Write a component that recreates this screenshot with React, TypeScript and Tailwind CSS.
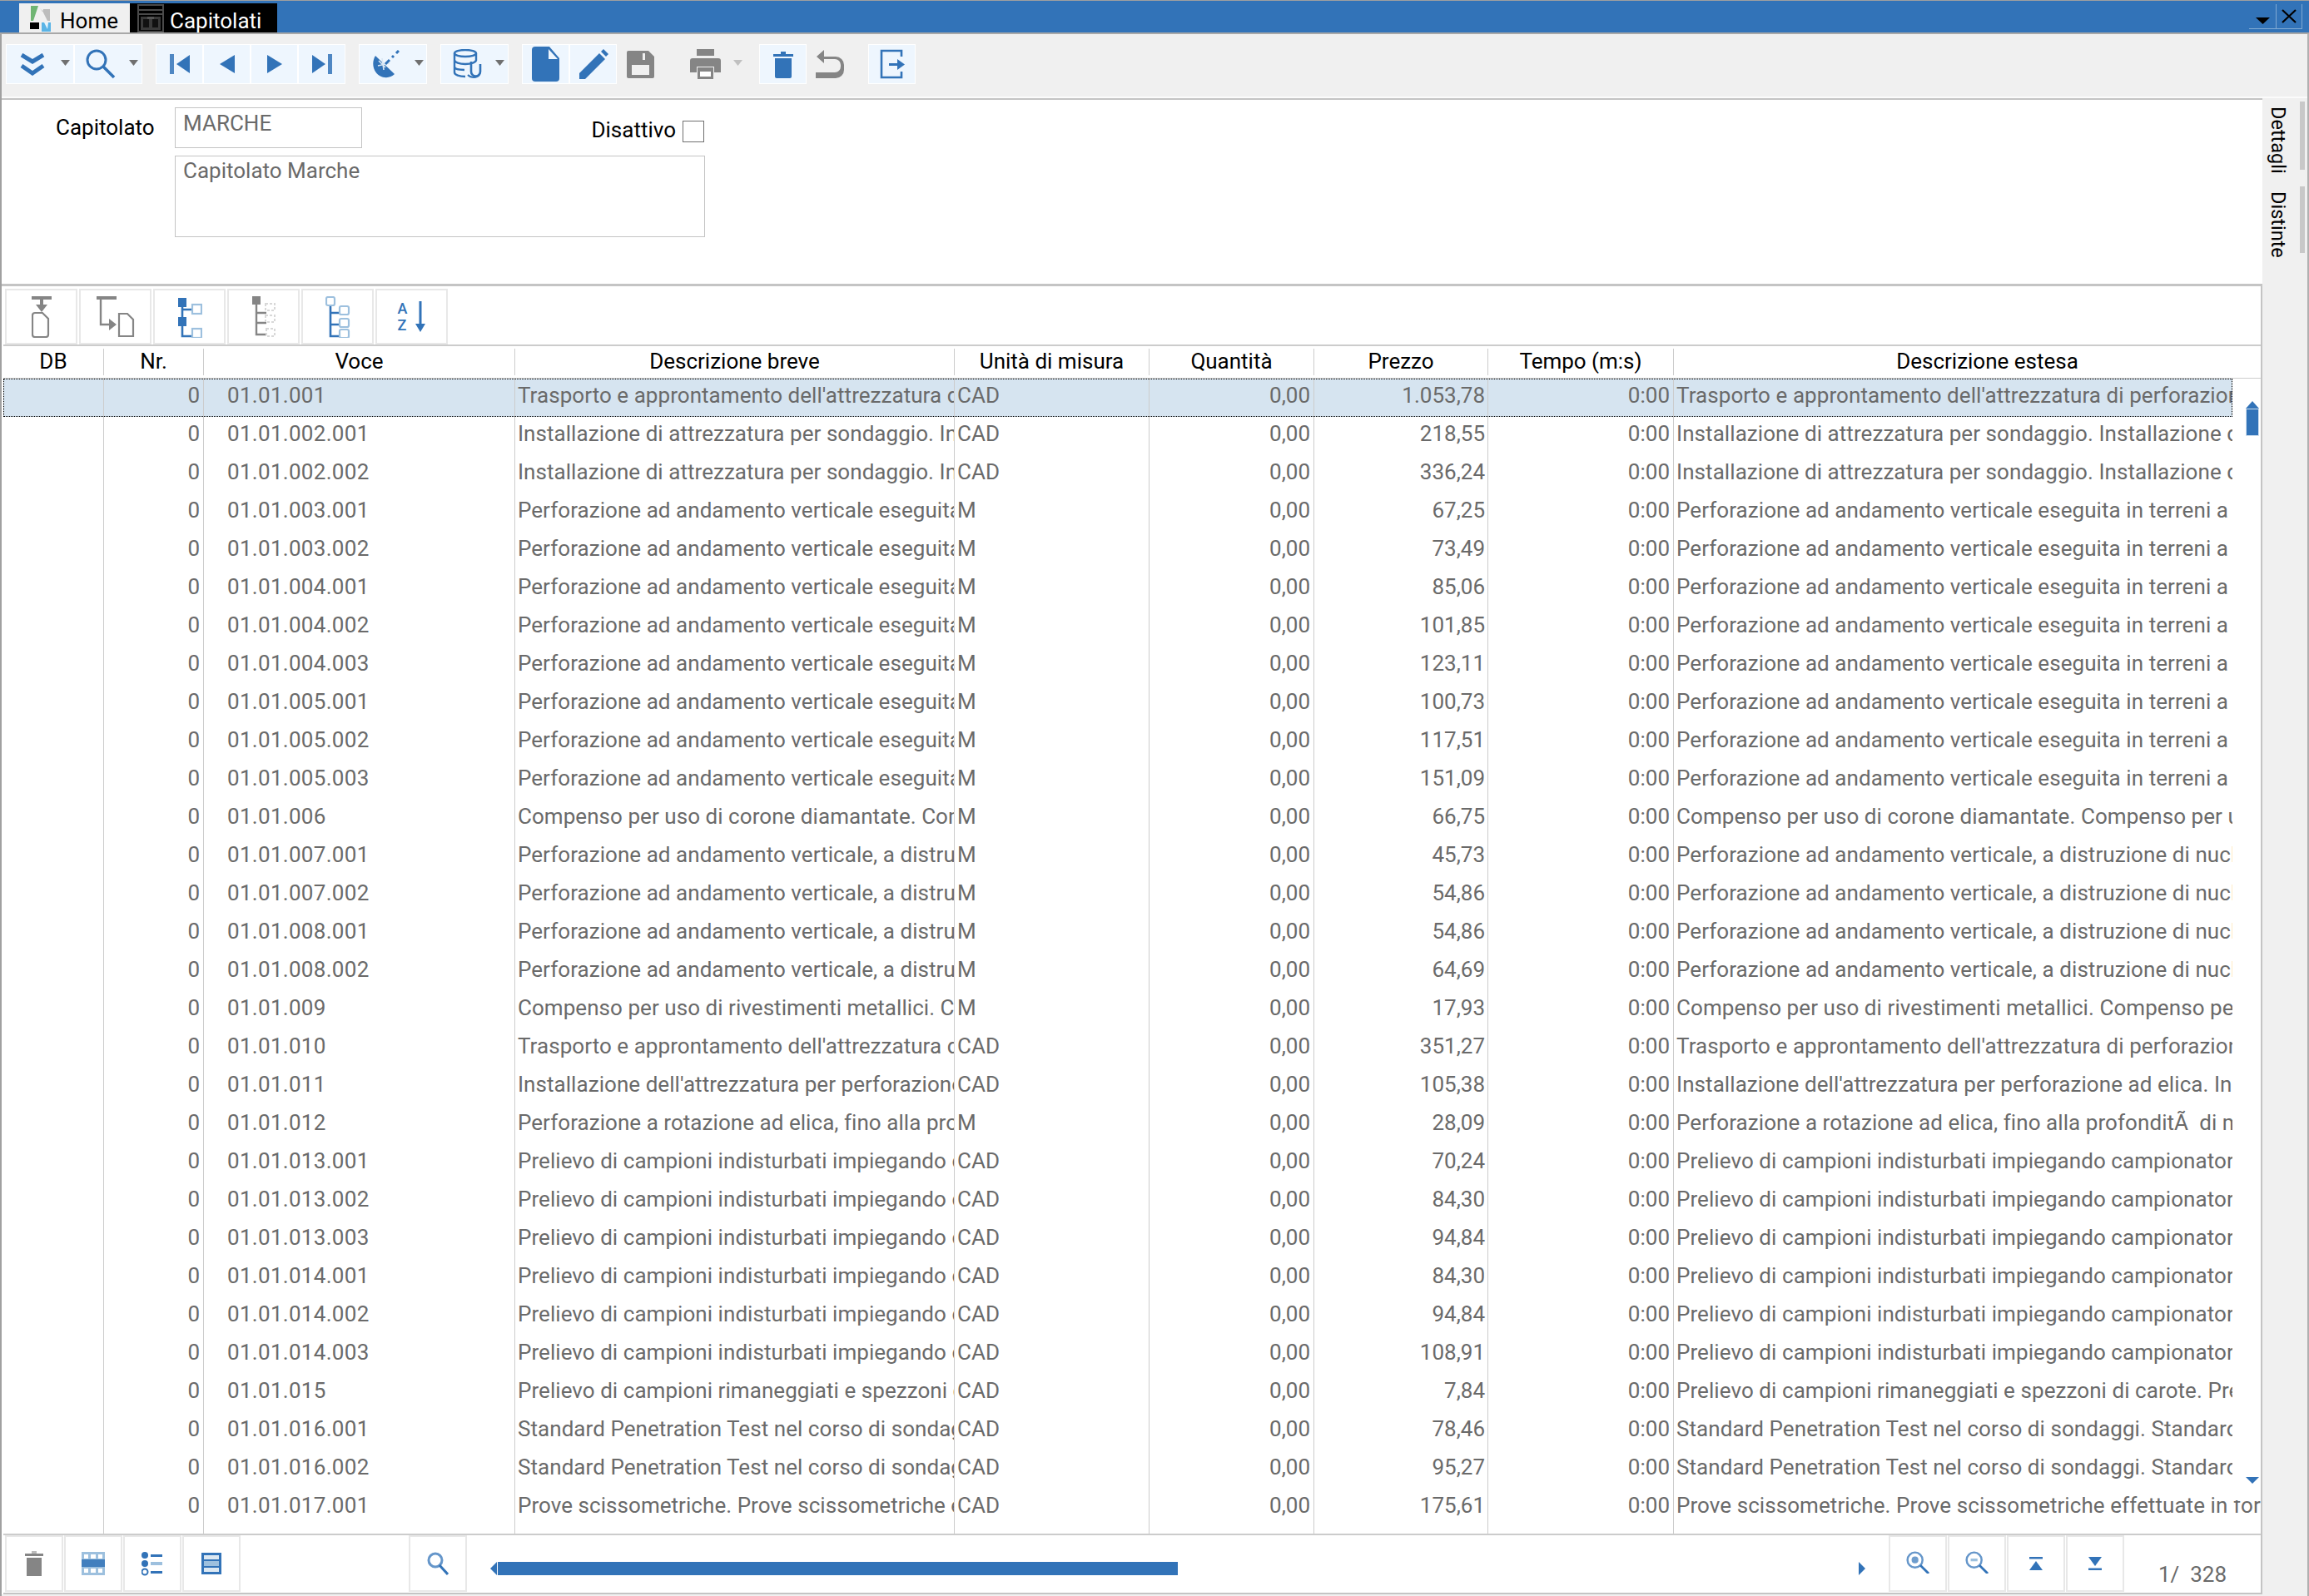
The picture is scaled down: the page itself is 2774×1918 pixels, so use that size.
import type { ReactNode } from "react";

const B = "#3273b8";
const L = "#9dc0de";
const G = "#858585";

const T = "Trasporto e approntamento dell'attrezzatura di perforazione";
const I = "Installazione di attrezzatura per sondaggio. Installazione di attrezzatura";
const P = "Perforazione ad andamento verticale eseguita in terreni a grana";
const C = "Compenso per uso di corone diamantate. Compenso per uso";
const D = "Perforazione ad andamento verticale, a distruzione di nucleo";
const R = "Compenso per uso di rivestimenti metallici. Compenso per uso";
const N = "Installazione dell'attrezzatura per perforazione ad elica. Installazione";
const E = "Perforazione a rotazione ad elica, fino alla profonditÃ\u00a0 di metri";
const K = "Prelievo di campioni indisturbati impiegando campionatore a pareti";
const M = "Prelievo di campioni rimaneggiati e spezzoni di carote. Prelievo";
const S = "Standard Penetration Test nel corso di sondaggi. Standard Penetration";
const V = "Prove scissometriche. Prove scissometriche effettuate in foro";

const rows: [string, string, string, string][] = [
  ["01.01.001", T, "CAD", "1.053,78"],
  ["01.01.002.001", I, "CAD", "218,55"],
  ["01.01.002.002", I, "CAD", "336,24"],
  ["01.01.003.001", P, "M", "67,25"],
  ["01.01.003.002", P, "M", "73,49"],
  ["01.01.004.001", P, "M", "85,06"],
  ["01.01.004.002", P, "M", "101,85"],
  ["01.01.004.003", P, "M", "123,11"],
  ["01.01.005.001", P, "M", "100,73"],
  ["01.01.005.002", P, "M", "117,51"],
  ["01.01.005.003", P, "M", "151,09"],
  ["01.01.006", C, "M", "66,75"],
  ["01.01.007.001", D, "M", "45,73"],
  ["01.01.007.002", D, "M", "54,86"],
  ["01.01.008.001", D, "M", "54,86"],
  ["01.01.008.002", D, "M", "64,69"],
  ["01.01.009", R, "M", "17,93"],
  ["01.01.010", T, "CAD", "351,27"],
  ["01.01.011", N, "CAD", "105,38"],
  ["01.01.012", E, "M", "28,09"],
  ["01.01.013.001", K, "CAD", "70,24"],
  ["01.01.013.002", K, "CAD", "84,30"],
  ["01.01.013.003", K, "CAD", "94,84"],
  ["01.01.014.001", K, "CAD", "84,30"],
  ["01.01.014.002", K, "CAD", "94,84"],
  ["01.01.014.003", K, "CAD", "108,91"],
  ["01.01.015", M, "CAD", "7,84"],
  ["01.01.016.001", S, "CAD", "78,46"],
  ["01.01.016.002", S, "CAD", "95,27"],
  ["01.01.017.001", V, "CAD", "175,61"],
];

const Icon = ({ w, h, children }: { w: number; h: number; children: ReactNode }) => (
  <svg width={w} height={h} viewBox={`0 0 ${w} ${h}`} className="block shrink-0">
    {children}
  </svg>
);

const Caret = ({ light }: { light?: boolean }) => (
  <Icon w={11} h={7}>
    <path d="M0 0h11L5.5 7z" fill={light ? "#c0c0c0" : "#707070"} />
  </Icon>
);

// top toolbar button
const Tb = ({ w, children, caret, pl }: { w: number; children: ReactNode; caret?: number; pl?: number }) => (
  <div
    className="h-[48px] shrink-0 flex items-center border border-white bg-[#eef6fe]"
    style={{ width: w, justifyContent: pl === undefined ? "center" : "flex-start", paddingLeft: pl }}
  >
    {children}
    {caret !== undefined && (
      <div style={{ marginLeft: caret }} className="mb-[3px]">
        <Caret />
      </div>
    )}
  </div>
);

// white framed button of the lower toolbars
const Fb = ({ w, h, children }: { w: number; h: number; children: ReactNode }) => (
  <div className="shrink-0 flex items-center justify-center border-2 border-[#e8e8e8] bg-white" style={{ width: w, height: h }}>
    {children}
  </div>
);

const Magnifier = ({ s = 1, inner }: { s?: number; inner?: ReactNode }) => (
  <svg width={34 * s} height={34 * s} viewBox="0 0 34 34" className="block shrink-0">
    <circle cx="13" cy="13" r="11" fill="none" stroke={B} strokeWidth="3" strokeOpacity=".75" />
    <path d="M21 21l12 12" stroke={B} strokeWidth="3.4" />
    {inner}
  </svg>
);

const HomeLogo = () => (
  <Icon w={25} h={31}>
    <path d="M1 0h9L4 18H1z" fill="#6fb573" />
    <path d="M12 3L15 7l1-3h8v14h-3L15 6z" fill="#bcbcbc" />
    <rect x="0" y="20" width="11" height="8" fill="#000" />
    <path d="M14 20h11v11H14z" fill="#5ab4e6" />
    <path d="M17 20l4 8 1-8z" fill="#e8f4fb" />
  </Icon>
);

const WinLogo = () => (
  <Icon w={32} h={34}>
    <rect x="1" y="1" width="30" height="32" fill="#000" stroke="#4a4a4a" strokeWidth="2" />
    <path d="M2 7h28M2 12h28" stroke="#4a4a4a" strokeWidth="2" />
    <path d="M4 15h24v16H4z" fill="#3a3a3a" />
    <path d="M7 18h7v10H7zM18 18h7v10h-7z" fill="#111" />
    <path d="M12 15h8v3h-8z" fill="#555" />
  </Icon>
);

const TopTools = () => (
  <div className="h-[75px] bg-[#f0f0f0] flex pl-[5px] pt-[12px]">
    <Tb w={82} pl={16} caret={19}>
      <Icon w={30} h={27}>
        <path d="M2 2l13 8 13-8M2 15l13 9 13-9" fill="none" stroke={B} strokeWidth="5" />
      </Icon>
    </Tb>
    <Tb w={82} pl={13} caret={16}>
      <Icon w={36} h={36}>
        <circle cx="13" cy="13" r="11" fill="none" stroke={B} strokeWidth="3" />
        <path d="M21 21l13 13" stroke={B} strokeWidth="3.5" />
      </Icon>
    </Tb>
    <div className="w-[16px] shrink-0" />
    <Tb w={57}>
      <Icon w={26} h={24}>
        <path d="M1 0h5v24H1z" fill={B} fillOpacity=".85" />
        <path d="M25 1v22L9 12z" fill={B} />
      </Icon>
    </Tb>
    <Tb w={57}>
      <Icon w={20} h={24}>
        <path d="M19 1v22L1 12z" fill={B} />
      </Icon>
    </Tb>
    <Tb w={57}>
      <Icon w={20} h={24}>
        <path d="M1 1v22l18-11z" fill={B} />
      </Icon>
    </Tb>
    <Tb w={57}>
      <Icon w={26} h={24}>
        <path d="M20 0h5v24h-5z" fill={B} fillOpacity=".85" />
        <path d="M1 1v22l16-11z" fill={B} />
      </Icon>
    </Tb>
    <div className="w-[16px] shrink-0" />
    <Tb w={82} pl={15} caret={18}>
      <Icon w={33} h={34}>
        <path d="M4 7C-1 15 1 26 9 31c7 4 14 2 18-2z" fill={B} />
        <path d="M8 13l8 8M12 10l2 14M7 19l14-3" stroke="#dbe8f4" strokeWidth="1.6" />
        <path d="M16 17l5-5M24 9l2-2M29 4l3-3" stroke={B} strokeWidth="3" />
      </Icon>
    </Tb>
    <div className="w-[16px] shrink-0" />
    <Tb w={82} pl={14} caret={16}>
      <Icon w={35} h={36}>
        <ellipse cx="15" cy="5" rx="13" ry="4" fill="none" stroke={B} strokeWidth="2.4" />
        <path d="M2 5v23c0 3 6 5 13 5M28 5v9M2 13c0 3 6 5 13 5s13-2 13-5M2 21c0 3 6 4 12 4" fill="none" stroke={B} strokeWidth="2.4" />
        <path d="M22 15v12a5 5 0 0 0 11 0v-9" fill="none" stroke={B} strokeWidth="2.6" />
        <path d="M18 31c4 4 11 4 14 0" fill="none" stroke={B} strokeWidth="2" />
      </Icon>
    </Tb>
    <div className="w-[16px] shrink-0" />
    <Tb w={57}>
      <Icon w={33} h={42}>
        <path d="M4 0h17l12 14v24a4 4 0 0 1-4 4H4a4 4 0 0 1-4-4V4a4 4 0 0 1 4-4z" fill={B} />
        <path d="M20 3v12h11z" fill="#eef6fe" />
      </Icon>
    </Tb>
    <Tb w={57}>
      <Icon w={36} h={37}>
        <path d="M1 29L25 5l7 7L8 36H1z" fill={B} />
        <path d="M27 3l3-3 6 6-3 3z" fill={B} />
      </Icon>
    </Tb>
    <div className="w-[57px] shrink-0 h-[48px] flex items-center justify-center">
      <Icon w={33} h={33}>
        <path d="M2 0h24l7 7v24a2 2 0 0 1-2 2H2a2 2 0 0 1-2-2V2a2 2 0 0 1 2-2z" fill={G} />
        <path d="M6 17h21v12H6z" fill="#f0f0f0" />
        <path d="M19 3h3v8h-3z" fill="#f0f0f0" />
      </Icon>
    </div>
    <div className="w-[114px] shrink-0 h-[48px] flex items-center pl-[31px]">
      <Icon w={37} h={36}>
        <path d="M8 0h21v8H8z" fill={G} />
        <path d="M3 11h31a3 3 0 0 1 3 3v14h-8v-7H8v7H0V14a3 3 0 0 1 3-3z" fill={G} />
        <path d="M9 22h19v14H9z" fill={G} />
        <path d="M12 27h13v6H12z" fill="#fff" />
      </Icon>
      <div className="ml-[15px] mb-[3px]">
        <Caret light />
      </div>
    </div>
    <Tb w={57}>
      <Icon w={24} h={34}>
        <path d="M0 5h24v3H0z" fill={B} />
        <path d="M9 2h6v4H9z" fill={B} />
        <path d="M2 10h20v22a2 2 0 0 1-2 2H4a2 2 0 0 1-2-2z" fill={B} />
      </Icon>
    </Tb>
    <div className="w-[74px] shrink-0 h-[48px] flex items-center pl-[11px]">
      <Icon w={34} h={34}>
        <path d="M10 0L1 8l9 8v-5h13a7 7 0 0 1 7 7v2a7 7 0 0 1-7 7H0v7h24a10 10 0 0 0 10-10v-6a10 10 0 0 0-10-10H10z" fill={G} />
      </Icon>
    </div>
    <Tb w={57}>
      <Icon w={30} h={36}>
        <path d="M26 9V2H2v32h24v-7" fill="none" stroke={B} strokeWidth="2.6" />
        <path d="M11 17h11v3H11z" fill={B} />
        <path d="M21 12l9 6.500-9 6.500z" fill={B} />
      </Icon>
    </Tb>
  </div>
);

const MidTools = () => (
  <div className="h-[70px] flex gap-[2px] pl-[2px] pt-[3px] bg-white">
    <Fb w={87} h={67}>
      <Icon w={24} h={50}>
        <path d="M0 0h24v4H0z" fill={G} />
        <path d="M10 4h4v6h5l-7 9-7-9h5z" fill={G} />
        <path d="M4 20h9l7 7v19a3 3 0 0 1-3 3H4a3 3 0 0 1-3-3V23a3 3 0 0 1 3-3z" fill="none" stroke={G} strokeWidth="2.2" />
      </Icon>
    </Fb>
    <Fb w={87} h={67}>
      <Icon w={46} h={50}>
        <path d="M0 2h24" stroke={G} strokeWidth="4" />
        <path d="M5 3v31h14" fill="none" stroke={G} strokeWidth="2.4" />
        <path d="M15 27l9 7-9 7z" fill={G} />
        <path d="M27 21h10l7 7v20H27z" fill="none" stroke={G} strokeWidth="2.2" />
      </Icon>
    </Fb>
    <Fb w={87} h={67}>
      <Icon w={30} h={50}>
        <path d="M6 8v40h14M6 16h14M6 32h0" fill="none" stroke={B} strokeWidth="2.6" />
        <rect x="1" y="2" width="10" height="11" fill={B} />
        <rect x="1" y="25" width="10" height="11" fill={B} />
        <rect x="18" y="10" width="11" height="11" fill="#fff" stroke={L} strokeWidth="2.2" />
        <rect x="18" y="39" width="11" height="11" fill="#fff" stroke={L} strokeWidth="2.2" />
      </Icon>
    </Fb>
    <Fb w={87} h={67}>
      <Icon w={28} h={50}>
        <path d="M5 8v38h12M5 20h12M5 32h12" fill="none" stroke={G} strokeWidth="2.4" />
        <rect x="0" y="0" width="10" height="10" fill={G} />
        <path d="M16 9h11v8H16zM16 23h11v8H16zM17 39h10v9H17z" fill="none" stroke="#d8d8d8" strokeWidth="2" strokeDasharray="3 2" />
      </Icon>
    </Fb>
    <Fb w={87} h={67}>
      <Icon w={30} h={50}>
        <path d="M6 10v38h12M6 20h12M6 34h12" fill="none" stroke={B} strokeWidth="2.6" />
        <rect x="1" y="1" width="10" height="10" rx="2" fill="#fff" stroke={L} strokeWidth="2.2" />
        <rect x="17" y="12" width="11" height="10" rx="2" fill="#fff" stroke={L} strokeWidth="2.2" />
        <rect x="17" y="27" width="11" height="10" rx="2" fill="#fff" stroke={L} strokeWidth="2.2" />
        <rect x="17" y="40" width="11" height="10" rx="2" fill="#fff" stroke={L} strokeWidth="2.2" />
      </Icon>
    </Fb>
    <Fb w={87} h={67}>
      <div className="flex items-center gap-[10px]">
        <div className="flex flex-col text-[18px] leading-[20px] font-medium text-[#3273b8]">
          <span>A</span>
          <span>Z</span>
        </div>
        <Icon w={12} h={38}>
          <path d="M4.500 0h3v29h-3z" fill={B} />
          <path d="M0 27h12l-6 10z" fill={B} />
        </Icon>
      </div>
    </Fb>
  </div>
);

const widths = [121, 120, 374, 528, 234, 198, 209, 223];
const heads = ["DB", "Nr.", "Voce", "Descrizione breve", "Unità di misura", "Quantità", "Prezzo", "Tempo (m:s)"];

const Header = () => (
  <div className="h-[38px] flex pt-[3px] text-black">
    {heads.map((h, i) => (
      <div key={h} className="h-[32px] flex items-center justify-center border-r border-[#cccccc] shrink-0 pb-[3px]" style={{ width: widths[i] }}>
        {h}
      </div>
    ))}
    <div className="h-[32px] flex-1 flex items-center justify-center pl-[48px] pb-[3px]">Descrizione estesa</div>
  </div>
);

const cellBase = "h-full shrink-0 border-r border-[#cccccc] flex items-center overflow-hidden whitespace-nowrap pb-[7px]";

const Row = ({ r, selected, last }: { r: [string, string, string, string]; selected: boolean; last: boolean }) => (
  <div
    className={
      "h-[46px] flex shrink-0 text-[#6a6a6a] overflow-hidden " +
      (last ? "w-[2712px] " : "w-[2678px] ") +
      (selected ? "bg-[#d6e4f0] outline-1 outline-dotted outline-black -outline-offset-1" : "")
    }
  >
    <div className={cellBase} style={{ width: widths[0] }} />
    <div className={cellBase + " justify-end pr-[4px]"} style={{ width: widths[1] }}>0</div>
    <div className={cellBase + " pl-[28px] tracking-[0.3px]"} style={{ width: widths[2] }}>{r[0]}</div>
    <div className={cellBase + " pl-[3px] tracking-[0.05px]"} style={{ width: widths[3] }}>{r[1]}</div>
    <div className={cellBase + " pl-[3px]"} style={{ width: widths[4] }}>{r[2]}</div>
    <div className={cellBase + " justify-end pr-[4px]"} style={{ width: widths[5] }}>0,00</div>
    <div className={cellBase + " justify-end pr-[3px]"} style={{ width: widths[6] }}>{r[3]}</div>
    <div className={cellBase + " justify-end pr-[4px]"} style={{ width: widths[7] }}>0:00</div>
    <div className="h-full flex-1 flex items-center overflow-hidden whitespace-nowrap pl-[3px] pb-[7px] tracking-[0.07px]">{r[1]}</div>
  </div>
);

const Grid = () => (
  <div className="relative h-[1388px] overflow-hidden">
    {rows.map((r, i) => (
      <Row key={r[0]} r={r} selected={i === 0} last={i === rows.length - 1} />
    ))}
    <div className="flex h-[8px]">
      {widths.map((w, i) => (
        <div key={i} className="h-full border-r border-[#cccccc] shrink-0" style={{ width: w }} />
      ))}
    </div>
    {/* vertical scrollbar, over the clipped text */}
    <div className="absolute right-0 top-0 w-[34px] h-[1348px] bg-white flex flex-col items-end pr-[2px]">
      <div className="mt-[27px]">
        <Icon w={16} h={9}>
          <path d="M8 0l8 9H0z" fill={B} />
        </Icon>
      </div>
      <div className="w-[16px] h-[33px] border border-[#cfe0ef] bg-[#3273b8]" />
      <div className="mt-auto mb-[20px]">
        <Icon w={16} h={8}>
          <path d="M0 0h16L8 8z" fill={B} />
        </Icon>
      </div>
    </div>
  </div>
);

const BottomTools = () => (
  <div className="h-[69px] flex bg-white pl-[2px] text-[#6a6a6a]">
    <div className="flex gap-[1px] h-[68px]">
      <Fb w={70} h={68}>
        <Icon w={22} h={30}>
          <path d="M0 3h22v3H0z" fill={G} />
          <path d="M8 0h6v3H8z" fill="#bbb" />
          <path d="M2 8h18v22H2z" fill={G} />
        </Icon>
      </Fb>
      <Fb w={70} h={68}>
        <svg width="28" height="28" viewBox="0 0 28 28" className="block shrink-0">
          <rect width="28" height="28" fill={L} />
          <path d="M3 3h5v5H3zM11 3h6v5h-6zM20 3h5v5h-5zM3 20h5v5H3zM11 20h6v5h-6zM20 20h5v5h-5z" fill="#fff" />
          <path d="M0 9h28v9H0z" fill={B} fillOpacity=".85" />
        </svg>
      </Fb>
      <Fb w={70} h={68}>
        <Icon w={26} h={30}>
          <circle cx="4" cy="5" r="4" fill={B} />
          <circle cx="4" cy="15" r="4" fill={B} />
          <circle cx="4" cy="25" r="3.500" fill="#fff" stroke={B} strokeWidth="2" />
          <path d="M11 4h14v3H11zM11 24h14v3H11z" fill={B} />
          <path d="M11 13h14v4H11z" fill={L} />
        </Icon>
      </Fb>
      <Fb w={70} h={68}>
        <Icon w={24} h={26}>
          <path d="M0 0h24v26H0z" fill={B} />
          <path d="M3 3h18v5H3zM3 18h18v5H3z" fill="#dce8f2" />
          <path d="M3 10h18v6H3z" fill={L} />
        </Icon>
      </Fb>
    </div>
    <div className="ml-[202px] h-[68px]">
      <Fb w={70} h={68}>
        <Icon w={26} h={28}>
          <circle cx="10" cy="10" r="8" fill="none" stroke={B} strokeOpacity=".75" strokeWidth="3" />
          <path d="M15 16l10 11" stroke={B} strokeWidth="3" />
        </Icon>
      </Fb>
    </div>
    <div className="ml-[28px] w-[1653px] mt-[32px] h-[16px] flex items-center">
      <Icon w={9} h={16}>
        <path d="M0 8l8-8v16z" fill={B} />
      </Icon>
      <div className="w-[817px] h-[16px] bg-[#3273b8]" />
      <div className="ml-auto">
        <Icon w={9} h={16}>
          <path d="M0 0l8 8-8 8z" fill={B} />
        </Icon>
      </div>
    </div>
    <div className="ml-[27px] flex gap-[1px] h-[68px]">
      <Fb w={70} h={68}>
        <div className="mb-[3px]">
          <Magnifier s={0.82} inner={<circle cx="13" cy="13" r="5" fill={B} fillOpacity=".7" />} />
        </div>
      </Fb>
      <Fb w={70} h={68}>
        <div className="mb-[3px]">
          <Magnifier s={0.82} inner={<path d="M8 11h10v4H8z" fill={L} />} />
        </div>
      </Fb>
      <Fb w={70} h={68}>
        <Icon w={16} h={16}>
          <path d="M0 0h16v2.500H0z" fill={B} />
          <path d="M8 5l8 11H0z" fill={B} />
        </Icon>
      </Fb>
      <Fb w={70} h={68}>
        <Icon w={16} h={16}>
          <path d="M0 0h16L8 11z" fill={B} />
          <path d="M0 13.500h16V16H0z" fill={B} />
        </Icon>
      </Fb>
    </div>
    <div className="ml-[41px] mt-[32px] h-[30px] flex items-center whitespace-pre">1/  328</div>
  </div>
);

const SideTab = ({ h, mt, label }: { h: number; mt: number; label: string }) => (
  <div className="flex justify-between" style={{ height: h, marginTop: mt }}>
    <span className="ml-[6px] mt-[6px] [writing-mode:vertical-rl] text-black text-[23.5px] leading-[26px]">{label}</span>
    <div className="w-[6px] h-full bg-[#c8c8c8] mr-[3px]" />
  </div>
);

export default function App() {
  return (
    <div className="w-[2774px] h-[1918px] overflow-hidden bg-[#f0f0f0] flex flex-col font-['Roboto',sans-serif] text-[26px] leading-[30px]">
      <div className="h-[1px] bg-[#a0a0a0]" />
      {/* title bar */}
      <div className="h-[38px] bg-[#3273b8] flex pt-[3px] pl-[23px]">
        <div className="w-[133px] h-[35px] bg-[#f0f0f0] flex items-center pl-[13px] pb-[1px] text-black">
          <div className="mt-[2px]"><HomeLogo /></div>
          <span className="ml-[11px] mt-[7px]">Home</span>
        </div>
        <div className="w-[177px] h-[36px] bg-black flex items-center pl-[9px] text-white">
          <WinLogo />
          <span className="ml-[7px] mt-[5px]">Capitolati</span>
        </div>
        <div className="ml-auto flex items-start mr-[8px] mt-[1px]">
          <div className="w-[32px] h-[30px] border-b border-[#7fa9d3] flex justify-center pt-[16px]">
            <Icon w={17} h={8}>
              <path d="M0 0h17L8.500 8z" fill="#000" />
            </Icon>
          </div>
          <div className="w-[32px] h-[30px] border-x border-b border-[#7fa9d3] flex items-center justify-center">
            <Icon w={18} h={17}>
              <path d="M1 1l16 15M17 1L1 16" stroke="#000" strokeWidth="2.200" fill="none" />
            </Icon>
          </div>
        </div>
      </div>
      <div className="h-[2px] bg-[#a8a8a8]" />
      <div className="flex-1 flex border-r-2 border-[#b0b0b0] min-h-0">
        <div className="w-[2px] bg-[#a0a0a0] shrink-0" />
        <div className="flex-1 flex flex-col min-w-0">
          <TopTools />
          <div className="h-[2px] bg-[#fbfbfb]" />
          <div className="flex-1 flex min-h-0">
            <div className="w-[2716px] flex flex-col shrink-0">
              <div className="h-[2px] bg-[#c4c4c4]" />
              {/* form */}
              <div className="h-[221px] bg-white flex pl-[65px] pt-[9px]">
                <div className="w-[119px] mt-[9px] text-black">Capitolato</div>
                <div className="ml-[24px] w-[637px] text-[#6a6a6a]">
                  <div className="flex items-start">
                    <div className="w-[225px] h-[49px] border border-[#c4c4c4] pl-[9px] pt-[3px]">MARCHE</div>
                    <div className="ml-auto flex items-center mt-[12px] mr-[1px] text-black">
                      <span className="mb-[3px]">Disattivo</span>
                      <div className="ml-[8px] w-[26px] h-[26px] border border-[#707070] bg-white" />
                    </div>
                  </div>
                  <div className="mt-[9px] h-[98px] border border-[#c4c4c4] pl-[9px] pt-[2px]">Capitolato Marche</div>
                </div>
              </div>
              <div className="h-[3px] bg-[#c4c4c4]" />
              {/* table */}
              <div className="flex-1 flex flex-col border-r-2 border-[#c4c4c4] bg-white min-h-0 pl-[2px]">
                <MidTools />
                <div className="h-[2px] bg-[#cccccc]" />
                <Header />
                <div className="h-[1px] bg-[#cccccc]" />
                <Grid />
                <div className="h-[2px] bg-[#cccccc]" />
                <BottomTools />
                <div className="h-[2px] bg-[#c4c4c4]" />
              </div>
              <div className="h-[2px]" />
            </div>
            {/* side tabs */}
            <div className="flex-1 flex flex-col pt-[4px]">
              <SideTab h={82} mt={0} label="Dettagli" />
              <SideTab h={80} mt={20} label="Distinte" />
            </div>
          </div>
        </div>
      </div>
    </div>
  );
}
